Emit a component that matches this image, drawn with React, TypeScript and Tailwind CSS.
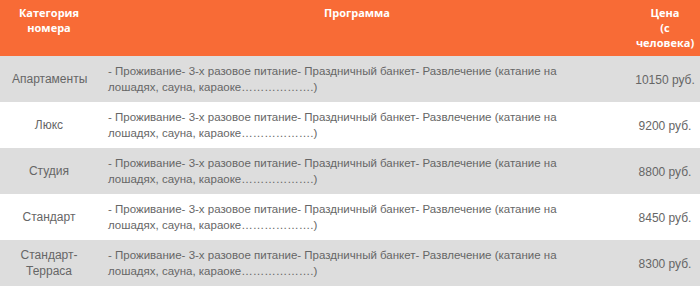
const rows = [
  { name: "Апартаменты", price: "10150 руб." },
  { name: "Люкс", price: "9200 руб." },
  { name: "Студия", price: "8800 руб." },
  { name: "Стандарт", price: "8450 руб." },
  { name: "Стандарт-Терраса", price: "8300 руб." },
];

const program =
  "- Проживание- 3-х разовое питание- Праздничный банкет- Развлечение (катание на лошадях, сауна, караоке……………….)";

export default function App() {
  return (
    <div className="w-[700px] h-[300px] bg-white overflow-hidden">
      <div className="grid grid-cols-[98px_532px_70px] h-[56px] bg-[#f86b36] text-white font-bold text-[11px] leading-[15px] font-['Open_Sans',sans-serif] text-center">
        <div className="pt-[5px] px-2">Категория номера</div>
        <div className="pt-[5px] pl-[10px] pr-[24px]">Программа</div>
        <div className="pt-[5px]">
          Цена
          <br />
          (с
          <br />
          человека)
        </div>
      </div>
      {rows.map((r, i) => (
        <div
          key={r.name}
          className={`grid grid-cols-[98px_532px_70px] h-[46px] items-center text-[12px] leading-[16px] text-[#666666] font-['Liberation_Sans',Arial,sans-serif] ${
            i % 2 === 0 ? "bg-[#dddddd]" : "bg-white"
          }`}
        >
          <div className="text-center px-3">{r.name}</div>
          <div className="pl-[10px] pr-[40px] text-[11.5px]">{program}</div>
          <div className="text-center pt-[2px]">{r.price}</div>
        </div>
      ))}
    </div>
  );
}
